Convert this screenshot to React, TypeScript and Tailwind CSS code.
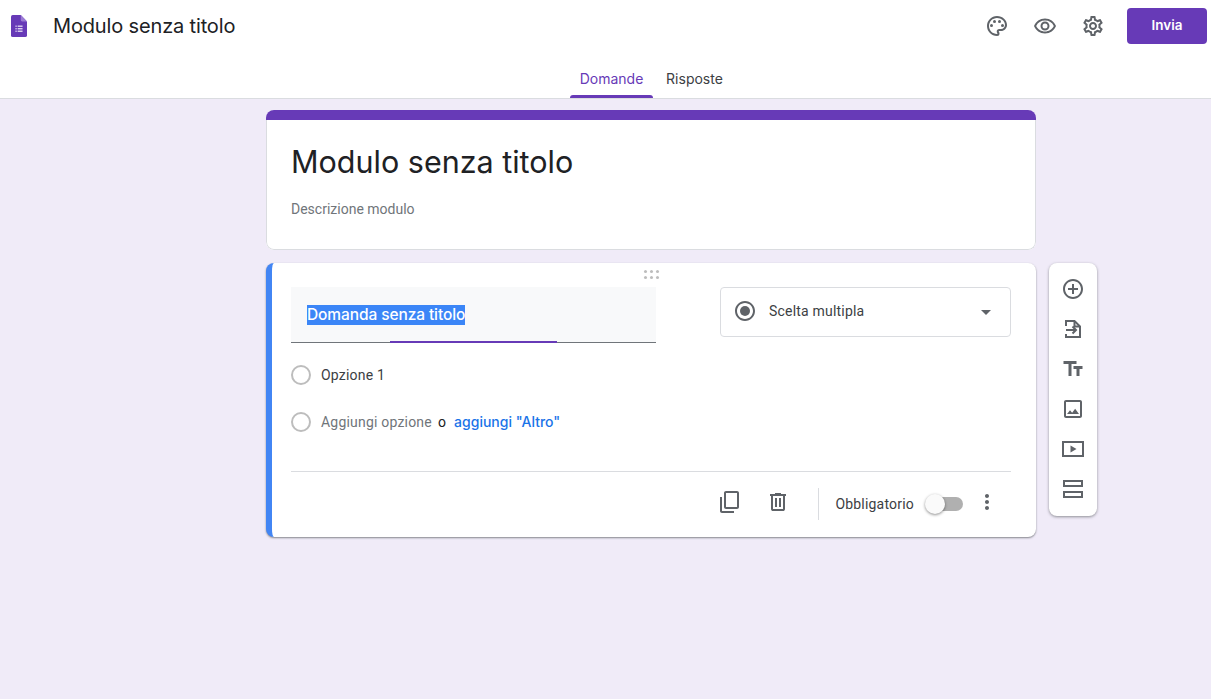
import {
  MdContentCopy,
  MdMoreVert,
  MdOutlineAddCircleOutline,
  MdOutlineImage,
  MdOutlinePalette,
  MdOutlineRadioButtonChecked,
  MdOutlineRemoveRedEye,
  MdOutlineSettings,
  MdTextFields,
} from "react-icons/md";

function FormsLogo() {
  return (
    <svg width="16" height="22" viewBox="0 0 18 24" preserveAspectRatio="none" className="block">
      <path d="M11 0H2a2 2 0 0 0-2 2v20a2 2 0 0 0 2 2h14a2 2 0 0 0 2-2V7z" fill="#673ab7" />
      <path d="M11 0l7 7h-5.500A1.500 1.500 0 0 1 11 5.500z" fill="#9b7bd4" />
      <g fill="#e8e0f5">
        <rect x="5" y="11.500" width="1.400" height="1.400" />
        <rect x="5" y="14.300" width="1.400" height="1.400" />
        <rect x="5" y="17" width="1.400" height="1.400" />
        <rect x="7.500" y="11.500" width="5.500" height="1.400" />
        <rect x="7.500" y="14.300" width="5.500" height="1.400" />
        <rect x="7.500" y="17" width="5.500" height="1.400" />
      </g>
    </svg>
  );
}

function ImportIcon() {
  return (
    <svg width="24" height="24" viewBox="0 0 24 24" fill="none" stroke="#5f6368" strokeWidth="2" className="block">
      <path d="M5 9V4h8.500L19 9.500V20H5v-3" />
      <path d="M13.500 4v5.500H19" />
      <path d="M5 13h10" />
      <path d="M11.500 9.500L15 13l-3.500 3.500" />
    </svg>
  );
}

function TrashIcon() {
  return (
    <svg width="24" height="24" viewBox="0 0 24 24" fill="#5f6368" className="-mt-[4px] ml-6 block">
      <path d="M7 21q-.825 0-1.412-.587Q5 19.825 5 19V6H4V4h5V3h6v1h5v2h-1v13q0 .825-.587 1.413Q17.825 21 17 21ZM17 6H7v13h10ZM9 17h2V8H9Zm4 0h2V8h-2Z" />
    </svg>
  );
}

function VideoIcon() {
  return (
    <svg width="24" height="24" viewBox="0 0 24 24" className="block">
      <rect x="2" y="5" width="20" height="14" fill="none" stroke="#5f6368" strokeWidth="2" />
      <path d="M9.500 8.500v7l6-3.500z" fill="#5f6368" />
    </svg>
  );
}

function SectionIcon() {
  return (
    <svg width="24" height="24" viewBox="0 0 24 24" fill="none" stroke="#5f6368" strokeWidth="2" className="block">
      <rect x="3" y="4" width="18" height="5" />
      <rect x="3" y="15" width="18" height="5" />
    </svg>
  );
}

function DragDots() {
  return (
    <div className="grid grid-cols-3 gap-x-[3px] gap-y-[3px]">
      {[0, 1, 2, 3, 4, 5].map((dot) => (
        <span key={dot} className="h-[3px] w-[3px] rounded-full bg-[#bdbdbd]" />
      ))}
    </div>
  );
}

function Radio() {
  return <span className="h-5 w-5 shrink-0 rounded-full border-2 border-[#bdbdbd]" />;
}

export default function App() {
  return (
    <div className="min-h-[699px] bg-[#f0ebf8] font-['Roboto',sans-serif] tracking-[0.2px] text-[#202124]">
      <header className="h-[99px] border-b border-[#dadce0] bg-white">
        <div className="flex h-[52px] items-center pr-[4px]">
          <div className="ml-[11px] w-4">
            <FormsLogo />
          </div>
          <h1 className="ml-[26px] font-['Inter',sans-serif] text-[20px] tracking-[-0.15px] text-[#202124]">
            Modulo senza titolo
          </h1>
          <div className="ml-auto flex items-center gap-6 text-[#5f6368]">
            <MdOutlinePalette size={24} />
            <MdOutlineRemoveRedEye size={24} />
            <MdOutlineSettings size={24} />
            <button
              type="button"
              className="-ml-[2px] h-9 w-20 rounded bg-[#673ab7] pb-[2px] font-['Inter',sans-serif] text-[13.5px] font-semibold tracking-normal text-white"
            >
              Invia
            </button>
          </div>
        </div>
        <nav className="ml-[570px] flex h-[46px] font-['Inter',sans-serif] text-[14px] tracking-normal">
          <div className="relative flex w-[83px] items-center justify-center pb-[3px] pt-[9px] text-[#673ab7]">
            Domande
            <span className="absolute inset-x-0 bottom-0 h-[3px] rounded-t-[3px] bg-[#673ab7]" />
          </div>
          <div className="flex w-[83px] items-center justify-center pb-[3px] pt-[9px] text-[#3c4043]">
            Risposte
          </div>
        </nav>
      </header>

      <main className="ml-[266px] flex items-start pt-[11px]">
        <div className="flex w-[770px] flex-col gap-[13px]">
          <section className="h-[140px] overflow-hidden rounded-lg bg-white">
            <div className="h-[10px] bg-[#673ab7]" />
            <div className="h-[130px] rounded-b-lg border-x border-b border-[#dadce0] pl-6 pt-[22px]">
              <h2 className="font-['Inter',sans-serif] text-[30.5px] leading-10 tracking-normal text-[#202124]">
                Modulo senza titolo
              </h2>
              <p className="mt-[17px] text-sm tracking-normal text-[#70757a]">Descrizione modulo</p>
            </div>
          </section>

          <section className="relative h-[274px] overflow-hidden rounded-lg border-l-[6px] border-[#4285f4] bg-white pl-[19px] pr-[25px] shadow-[0_1px_2px_rgba(60,64,67,0.6)]">
            <div className="absolute left-[372px] top-[7px]">
              <DragDots />
            </div>
            <div className="flex items-start justify-between pt-6">
              <div className="relative h-14 w-[365px] border-b border-[#70757a] bg-[#f8f9fa] pl-4 pt-4">
                <span className="inline-block bg-[#3b86f7] font-['Inter',sans-serif] text-[15.5px] font-medium leading-5 tracking-[-0.1px] text-white">
                  Domanda senza titolo
                </span>
                <span className="absolute bottom-[-1px] left-[99px] h-[2px] w-[167px] bg-[#673ab7]" />
              </div>
              <div className="flex h-[50px] w-[291px] items-center rounded border border-[#dadce0] pl-3 pr-[19px]">
                <MdOutlineRadioButtonChecked size={24} className="-mt-[2px] text-[#5f6368]" />
                <span className="-mt-[2px] ml-3 text-sm text-[#3c4043]">Scelta multipla</span>
                <span className="ml-auto h-0 w-0 border-x-[5px] border-t-[5px] border-x-transparent border-t-[#5f6368]" />
              </div>
            </div>

            <div className="mt-[22px] flex h-5 items-center gap-[10px] text-sm text-[#3c4043]">
              <Radio />
              <span>Opzione 1</span>
            </div>
            <div className="mt-[27px] flex h-5 items-center gap-[10px] text-sm">
              <Radio />
              <span className="text-[#70757a]">Aggiungi opzione</span>
              <span className="-ml-[4px] text-[#202124]">o</span>
              <span className="-ml-[2px] font-['Inter',sans-serif] text-[14px] font-medium tracking-normal text-[#1a73e8]">
                aggiungi "Altro"
              </span>
            </div>

            <div className="mt-[39px] border-t border-[#dadce0]" />
            <div className="flex h-[64px] items-center justify-end pr-3">
              <MdContentCopy size={24} className="-mt-[4px] -scale-y-100 text-[#5f6368]" />
              <TrashIcon />
              <span className="ml-[28px] h-8 w-px bg-[#dadce0]" />
              <span className="ml-4 text-sm text-[#3c4043]">Obbligatorio</span>
              <div className="relative ml-[11px] h-[14px] w-[38px]">
                <span className="absolute right-0 top-0 h-[14px] w-[33px] rounded-full bg-[#b0b0b0]" />
                <span className="absolute left-0 top-[-3px] h-5 w-5 rounded-full bg-[#fafafa] shadow-[0_1px_3px_rgba(0,0,0,0.45)]" />
              </div>
              <MdMoreVert size={24} className="-mt-[4px] ml-3 text-[#5f6368]" />
            </div>
          </section>
        </div>

        <aside className="ml-[13px] mt-[153px] flex h-[253px] w-12 flex-col items-center gap-4 rounded-lg bg-white pt-[14px] text-[#5f6368] shadow-[0_1px_3px_rgba(60,64,67,0.55)]">
          <MdOutlineAddCircleOutline size={24} />
          <ImportIcon />
          <MdTextFields size={24} />
          <MdOutlineImage size={24} />
          <VideoIcon />
          <SectionIcon />
        </aside>
      </main>
    </div>
  );
}
